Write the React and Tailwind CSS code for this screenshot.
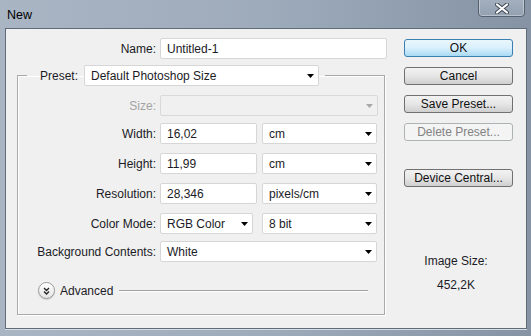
import React from 'react';

const Caret = ({ disabled }) => (
  <svg width="7" height="4" viewBox="0 0 7 4" className="shrink-0">
    <path d="M0 0h7L3.5 4z" fill={disabled ? '#a8a8a8' : '#000'} />
  </svg>
);

const Field = ({ value, w }) => (
  <div className={`${w} h-[21px] bg-white border border-[#d6d6d6] rounded-[2px] flex items-center pl-[6px]`}>
    {value}
  </div>
);

const Combo = ({ value, w, disabled }) => (
  <div
    className={`${w} h-[21px] border rounded-[2px] flex items-center pl-[6px] pr-[4px] ${
      disabled ? 'bg-[#f0f0f0] border-[#d9d9d9]' : 'bg-white border-[#d6d6d6]'
    }`}
  >
    <span className="flex-1">{value}</span>
    <Caret disabled={disabled} />
  </div>
);

const Btn = ({ label, primary, disabled, className = '' }) => (
  <div
    className={`h-[18px] rounded-[3px] border flex items-center justify-center leading-none ${className} ${
      primary
        ? 'border-[#3c7fb1] bg-gradient-to-b from-[#eaf6fd] via-[#d9f0fc] to-[#a9d9f4] text-[#111]'
        : disabled
        ? 'border-[#adb2b5] bg-[#f4f4f4] text-[#838383]'
        : 'border-[#707070] bg-gradient-to-b from-[#f2f2f2] via-[#e6e6e6] to-[#cfcfcf] text-[#111]'
    }`}
  >
    {label}
  </div>
);

const Row = ({ label, dim, children, className = '' }) => (
  <div className={`flex items-center h-[21px] ${className}`}>
    <span className={`w-[138px] text-right ${dim ? 'text-[#a3a3a3]' : ''}`}>{label}</span>
    <div className="ml-[4px] flex gap-[5px]">{children}</div>
  </div>
);

export default function App() {
  return (
    <div className="w-[531px] h-[336px] flex flex-col overflow-hidden bg-gradient-to-r from-[#a9b5c3] via-[#9eabbb] to-[#8593a4] font-['Liberation_Sans',Arial,sans-serif] text-[12px] text-[#1b1b26]">
      {/* title bar */}
      <div className="h-[28px] flex items-start shrink-0">
        <span className="ml-[7px] mt-[6px] text-[12.5px] text-black">New</span>
        <div className="ml-auto mr-[6px] -mt-[2px] w-[47px] h-[19px] rounded-b-[4px] border border-[#56616f] bg-gradient-to-b from-[#a4b0be] to-[#93a0b0] shadow-[inset_0_0_0_1px_rgba(255,255,255,0.35)] flex items-center justify-center">
          <svg width="14" height="11" viewBox="0 0 14 11" className="mt-[2px]">
            <path d="M2 1.5l10 8M12 1.5l-10 8" stroke="#3d4654" strokeWidth="4" strokeLinecap="round" />
            <path d="M2 1.5l10 8M12 1.5l-10 8" stroke="#fff" strokeWidth="2.2" strokeLinecap="round" />
          </svg>
        </div>
      </div>

      {/* client area */}
      <div className="flex-1 ml-[5px] mr-[4px] mb-[7px] border border-[#5f6b79] bg-[#f0f0f0] flex shadow-[0_1px_0_#d8dee6]">
        {/* left column */}
        <div className="pl-[11px] pt-[9px] w-[382px] shrink-0">
          <div className="flex items-center h-[21px]">
            <span className="w-[139px] text-right">Name:</span>
            <div className="ml-[4px]">
              <Field value="Untitled-1" w="w-[227px]" />
            </div>
          </div>

          <fieldset className="mt-[6px] w-[368px] border border-[#a9a9a9] shadow-[inset_1px_1px_0_#fff,1px_1px_0_#fff] pb-[15px]">
            <legend className="ml-[9px] pl-[13px] pr-[6px] flex items-center h-[21px]">
              <span>Preset:</span>
              <div className="ml-[6px]">
                <Combo value="Default Photoshop Size" w="w-[235px]" />
              </div>
            </legend>

            <Row label="Size:" dim className="mt-[9px]">
              <Combo value="" w="w-[218px]" disabled />
            </Row>
            <Row label="Width:" className="mt-[7px]">
              <Field value="16,02" w="w-[97px]" />
              <Combo value="cm" w="w-[115px]" />
            </Row>
            <Row label="Height:" className="mt-[9px]">
              <Field value="11,99" w="w-[97px]" />
              <Combo value="cm" w="w-[115px]" />
            </Row>
            <Row label="Resolution:" className="mt-[9px]">
              <Field value="28,346" w="w-[97px]" />
              <Combo value="pixels/cm" w="w-[115px]" />
            </Row>
            <Row label="Color Mode:" className="mt-[9px]">
              <Combo value="RGB Color" w="w-[93px]" />
              <div className="ml-[4px]">
                <Combo value="8 bit" w="w-[115px]" />
              </div>
            </Row>
            <Row label="Background Contents:" className="mt-[7px]">
              <Combo value="White" w="w-[217px]" />
            </Row>

            <div className="mt-[20px] flex items-center h-[17px] pl-[20px] pr-[16px]">
              <div className="w-[17px] h-[17px] rounded-full border border-[#9a9a9a] bg-gradient-to-b from-white to-[#e4e4e4] flex items-center justify-center shadow-[0_1px_1px_rgba(0,0,0,0.15)]">
                <svg width="7" height="8" viewBox="0 0 7 8">
                  <path d="M1 1l2.5 2.5L6 1M1 4.5L3.5 7 6 4.5" stroke="#222" strokeWidth="1.3" fill="none" />
                </svg>
              </div>
              <span className="ml-[5px]">Advanced</span>
              <div className="ml-[6px] flex-1 h-[2px] border-t border-[#a0a0a0] border-b border-b-white" />
            </div>
          </fieldset>
        </div>

        {/* right column */}
        <div className="ml-[16px] w-[109px] pt-[10px] flex flex-col">
          <Btn label="OK" primary />
          <Btn label="Cancel" className="mt-[10px]" />
          <Btn label="Save Preset..." className="mt-[10px]" />
          <Btn label="Delete Preset..." disabled className="mt-[10px]" />
          <Btn label="Device Central..." className="mt-[28px]" />
          <div className="mt-[67px] pr-[5px] text-center leading-[14px]">Image Size:</div>
          <div className="mt-[10px] pr-[5px] text-center leading-[14px]">452,2K</div>
        </div>
      </div>
    </div>
  );
}
